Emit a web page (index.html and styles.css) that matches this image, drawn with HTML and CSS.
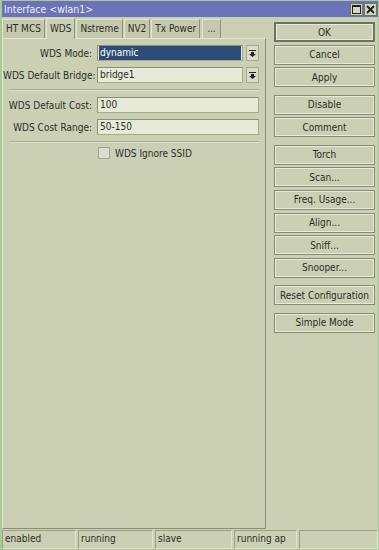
FILE: index.html
```html
<!DOCTYPE html>
<html lang="en">
<head>
	<meta charset="UTF-8">
	<title>Interface &lt;wlan1&gt;</title>
	<link rel="stylesheet" href="styles.css">
</head>
<body>
	<div class="window">
		<div class="titlebar">
			<span class="title">Interface &lt;wlan1&gt;</span>
			<div class="title_btns">
				<span class="tbtn">
					<svg width="9" height="9" viewBox="0 0 9 9"><rect x="0.5" y="0.5" width="8" height="8" fill="none" stroke="#222" stroke-width="1"/><line x1="0" y1="1.5" x2="9" y2="1.5" stroke="#222" stroke-width="1"/></svg>
				</span>
				<span class="tbtn">
					<svg width="9" height="9" viewBox="0 0 9 9"><path d="M1 1L8 8M8 1L1 8" stroke="#222" stroke-width="2"/></svg>
				</span>
			</div>
		</div>
		<div class="main">
			<div class="left">
				<ul class="tabs">
					<li>HT MCS</li>
					<li class="tab_on">WDS</li>
					<li>Nstreme</li>
					<li>NV2</li>
					<li>Tx Power</li>
					<li>...</li>
				</ul>
				<div class="panel">
					<div class="row">
						<label>WDS Mode:</label>
						<div class="field">
							<div class="input"><span class="sel">dynamic</span></div>
							<span class="drop"><svg width="7" height="7" viewBox="0 0 7 7"><rect x="0" y="0" width="7" height="1" fill="#222"/><path d="M2 2H5V4H7L3.5 7L0 4H2Z" fill="#222"/></svg></span>
						</div>
					</div>
					<div class="row">
						<label>WDS Default Bridge:</label>
						<div class="field">
							<div class="input">bridge1</div>
							<span class="drop"><svg width="7" height="7" viewBox="0 0 7 7"><rect x="0" y="0" width="7" height="1" fill="#222"/><path d="M2 2H5V4H7L3.5 7L0 4H2Z" fill="#222"/></svg></span>
						</div>
					</div>
					<div class="sep"></div>
					<div class="row">
						<label>WDS Default Cost:</label>
						<div class="field">
							<div class="input">100</div>
						</div>
					</div>
					<div class="row">
						<label>WDS Cost Range:</label>
						<div class="field">
							<div class="input">50-150</div>
						</div>
					</div>
					<div class="sep sep2"></div>
					<div class="check_row">
						<span class="check"></span>
						<span>WDS Ignore SSID</span>
					</div>
				</div>
			</div>
			<div class="side">
				<div class="group">
					<button class="btn btn_default">OK</button>
					<button class="btn">Cancel</button>
					<button class="btn">Apply</button>
				</div>
				<div class="group">
					<button class="btn">Disable</button>
					<button class="btn">Comment</button>
				</div>
				<div class="group">
					<button class="btn">Torch</button>
					<button class="btn">Scan...</button>
					<button class="btn">Freq. Usage...</button>
					<button class="btn">Align...</button>
					<button class="btn">Sniff...</button>
					<button class="btn">Snooper...</button>
				</div>
				<div class="group">
					<button class="btn">Reset Configuration</button>
				</div>
				<div class="group">
					<button class="btn">Simple Mode</button>
				</div>
			</div>
		</div>
		<div class="status">
			<span class="cell">enabled</span>
			<span class="cell">running</span>
			<span class="cell">slave</span>
			<span class="cell">running ap</span>
			<span class="cell"></span>
		</div>
	</div>
</body>
</html>
```

FILE: styles.css
```css
/* base */
*{ margin:0; padding:0; box-sizing:border-box; }
li{ list-style:none; }
html,body{ width:379px; height:550px; overflow:hidden; }
body{ font-family:"DejaVu Sans Condensed","DejaVu Sans",sans-serif; font-size:10px; color:#2b2d26; background:#cbd0b5; }

.window{ width:379px; height:550px; border:1px solid #a9c999; border-left-width:2px; display:flex; flex-direction:column; background:#cbd0b5; }

/* title */
.titlebar{ height:16px; background:#6a73b6; display:flex; align-items:center; justify-content:space-between; padding:0 1px 0 2px; }
.title{ color:#eceef8; font-size:10.5px; }
.title_btns{ display:flex; gap:1px; }
.tbtn{ width:13px; height:13px; background:#d3d7c1; border:1px solid #6f7460; display:flex; align-items:center; justify-content:center; }

/* main */
.main{ height:512px; display:flex; }
.left{ width:264px; display:flex; flex-direction:column; }
.tabs{ height:21px; display:flex; align-items:flex-end; gap:1px; }
.tabs li{ flex-shrink:0; white-space:nowrap; height:19px; padding:0 3px; line-height:18px; background:#c4c9ad; border:1px solid #e1e5d2; border-right-color:#8e937c; border-bottom:none; }
.tabs li:last-child{ margin-left:1px; padding:0 4px; }
.tabs .tab_on{ height:21px; line-height:20px; background:#cbd0b5; margin-bottom:-1px; position:relative; z-index:1; }
.panel{ flex:1; border:1px solid #e1e5d2; border-right-color:#8a8f78; border-bottom-color:#8a8f78; padding:6px 6px 0 0; }

.row{ display:flex; align-items:center; height:16px; margin-bottom:6px; }
.row label{ width:89px; text-align:right; margin-right:5px; white-space:nowrap; }
.field{ flex:1; display:flex; gap:3px; }
.input{ flex:1; height:16px; background:#e6ead6; border:1px solid #a3a891; border-top-color:#8a8f78; border-left-color:#8a8f78; padding:0 2px; line-height:14px; }
.sel{ display:block; background:#2f4b78; color:#fff; margin:0 -1px; padding:0 1px; }
.drop{ width:13px; height:16px; background:#d9ddc8; border:1px solid #a3a891; display:flex; align-items:center; justify-content:center; }

.sep{ height:2px; border-top:1px solid #a9ae97; border-bottom:1px solid #dde1cd; margin:1px 0 6px 6px; }
.sep2{ margin-top:2px; margin-bottom:4px; }
.check_row{ display:flex; align-items:center; gap:5px; padding-left:95px; }
.check{ width:12px; height:12px; background:#dadecb; border:1px solid #9ea38c; }

/* buttons */
.side{ flex:1; padding:5px 3px 0 8px; }
.group{ display:flex; flex-direction:column; gap:2.6px; margin-bottom:7.5px; }
.btn{ display:block; width:101px; height:20px; font-family:inherit; font-size:10px; color:#2b2d26; background:#cbd0b5; border:1px solid #878c75; box-shadow:inset 0 0 0 1px #e7eadb; }
.btn_default{ border:2px solid #6e735e; }

/* status */
.status{ height:19px; margin-top:1px; display:grid; grid-template-columns:74px 75px 77px 63px 1fr; gap:2px; }
.cell{ border:1px solid #9ca18a; border-right-color:#e0e4d1; border-bottom-color:#e0e4d1; padding:0 2px; line-height:16px; }
```
